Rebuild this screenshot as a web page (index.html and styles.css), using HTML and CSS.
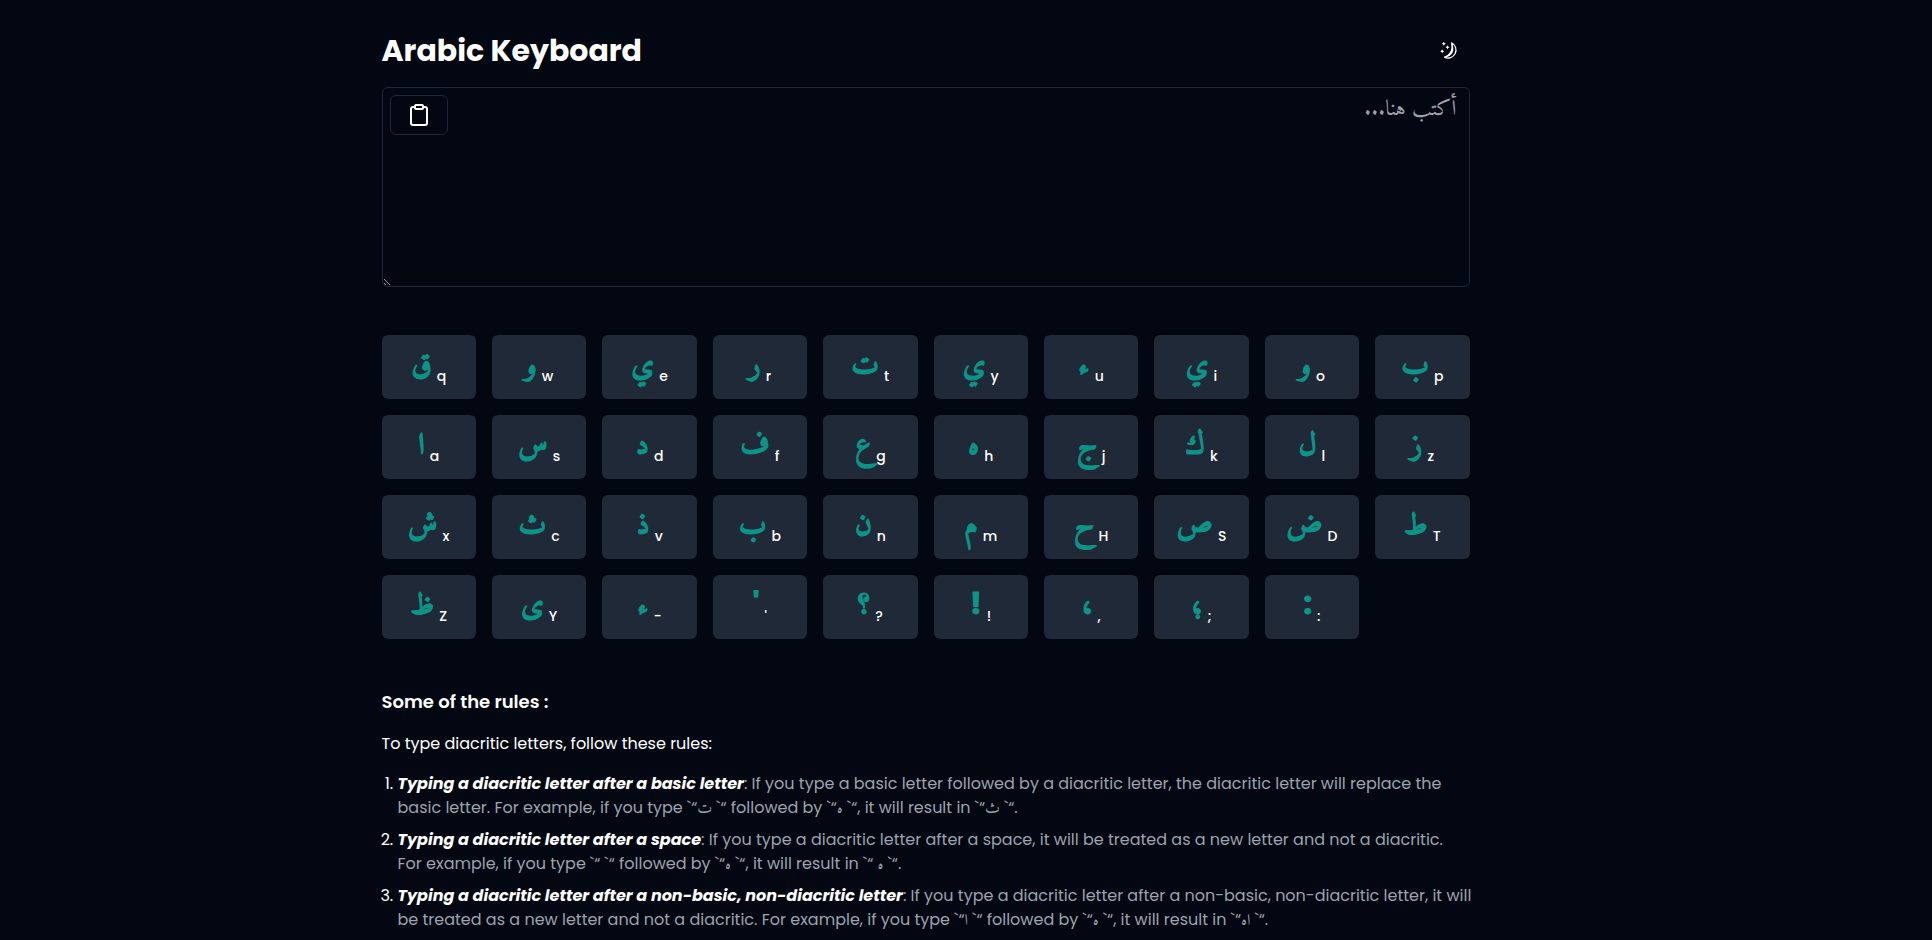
FILE: index.html
```html
<!DOCTYPE html>
<html lang="en">
<head>
<meta charset="utf-8">
<title>Arabic Keyboard</title>
<link rel="stylesheet" href="styles.css">
</head>
<body>
<main class="page">
<header class="header">
<h1 class="title">Arabic Keyboard</h1>
<button class="theme-toggle" type="button" aria-label="Toggle theme">
<svg width="20" height="20" viewBox="0 0 20 20" fill="none" stroke="currentColor" stroke-width="1.200" stroke-linejoin="round" aria-hidden="true">
<path d="M11.500 1.800A7.900 7.900 0 1 1 4.500 16.200C10.500 14.500 13.800 8.500 11.500 1.800z"/>
<path fill="currentColor" stroke="none" d="M11 1.600C13 7.500 10.500 13.500 4.300 16.200C10.500 17 17 10 11 1.600z"/>
<path fill="currentColor" stroke="none" d="M3.800.8l.7 1.300 1.300.7-1.300.7-.7 1.300-.7-1.300-1.300-.7 1.300-.7zM7.500 4.300l.7 1.300 1.300.7-1.300.7-.7 1.300-.7-1.300-1.300-.7 1.300-.7zM2.200 8.300l.7 1.300 1.300.7-1.300.7-.7 1.300-.7-1.300-1.300-.7 1.300-.7z"/>
</svg>
</button>
</header>
<div class="editor">
<textarea class="editor-text" dir="rtl" lang="ar" aria-label="Arabic text" placeholder="أكتب هنا..."></textarea>
<button class="copy" type="button" aria-label="Copy text">
<svg width="24" height="24" viewBox="0 0 24 24" fill="none" stroke="currentColor" stroke-width="2" stroke-linecap="round" stroke-linejoin="round" aria-hidden="true"><rect x="8" y="2" width="8" height="4" rx="1"/><path d="M16 4h2a2 2 0 0 1 2 2v14a2 2 0 0 1-2 2H6a2 2 0 0 1-2-2V6a2 2 0 0 1 2-2h2"/></svg>
</button>
</div>
<div class="keys" id="keys"></div>
<section class="rules">
<h2 class="rules-title">Some of the rules :</h2>
<p class="rules-intro">To type diacritic letters, follow these rules:</p>
<ol class="rules-list">
<li><strong class="rule-name">Typing a diacritic letter after a basic letter</strong><span class="rule-text">: If you type a basic letter followed by a diacritic letter, the diacritic letter will replace the basic letter. For example, if you type `“ت `“ followed by `“ه `“, it will result in `“ث `“.</span></li>
<li><strong class="rule-name">Typing a diacritic letter after a space</strong><span class="rule-text">: If you type a diacritic letter after a space, it will be treated as a new letter and not a diacritic. For&nbsp;example, if you type `“ `“ followed by `“ه `“, it will result in `“ ه `“.</span></li>
<li><strong class="rule-name">Typing a diacritic letter after a non-basic, non-diacritic letter</strong><span class="rule-text">: If you type a diacritic letter after a non-basic, non-diacritic letter, it will be treated as a new letter and not a diacritic. For example, if you type `“ا `“ followed by `“ه `“, it will result in `“اه `“.</span></li>
</ol>
</section>
</main>
<script src="keys.js"></script>
</body>
</html>
```
FILE: styles.css
```css
* { box-sizing: border-box; }
body {
  margin: 0;
  padding-right: 81px;
  background: #030711;
  color: #fff;
  font-family: Poppins, Inter, Amiri, "Noto Naskh Arabic", "Noto Sans Arabic", "DejaVu Sans", sans-serif;
  font-variant-ligatures: no-contextual;
  font-size: 16px;
  line-height: 24px;
}
.page { max-width: 1152px; margin: 0 auto; padding: 31px 32px 32px; }
.header { display: flex; align-items: center; justify-content: space-between; margin-bottom: 16px; }
.title { margin: 0; font-size: 30px; line-height: 36px; font-weight: 700; }
.theme-toggle { height: 40px; border: 0; padding: 0 10px; background: none; color: inherit; display: flex; align-items: center; }
.editor { position: relative; margin-bottom: 48px; }
.editor-text {
  display: block; width: 100%; height: 200px; padding: 8px 12px;
  border: 1px solid #1d283a; border-radius: 6px; background: transparent; color: #fff;
  font-family: Amiri, "Noto Naskh Arabic", "Noto Sans Arabic", "DejaVu Sans", sans-serif; font-size: 22px; line-height: 28px; resize: vertical;
}
.editor-text::placeholder { color: #9ca3af; }
.copy {
  position: absolute; top: 8px; left: 8px; height: 40px; width: 58px; padding: 0;
  display: flex; align-items: center; justify-content: center;
  border: 1px solid #1d283a; border-radius: 6px; background: #030711; color: #fff;
}
.keys { display: grid; grid-template-columns: repeat(10, 1fr); gap: 16px; margin-bottom: 49px; }
.key {
  height: 64px; padding: 0 0 13px; border: 0; border-radius: 6px; background: #1f2937; color: #fff;
  font-family: inherit; font-variant-ligatures: no-contextual; font-size: 14px; font-weight: 500; line-height: 20px;
  display: flex; align-items: flex-end; justify-content: center; gap: 5px;
}
.key-letter { color: #0d9488; font-weight: 700; font-size: 30px; line-height: 44px; -webkit-text-stroke: 1px #0d9488; }
.rules-title { margin: 0 0 16px; font-size: 18px; line-height: 28px; font-weight: 600; }
.rules-intro { margin: 0 0 16px; }
.rules-list { margin: 0 -4px 0 0; padding-left: 16px; display: grid; gap: 8px; }
.rule-name { font-weight: 700; font-style: italic; }
.rule-text { color: #9ca3af; }
```
FILE: keys.js
```js
const rows = [
  ["قq", "وw", "يe", "رr", "تt", "يy", "ءu", "يi", "وo", "بp"],
  ["اa", "سs", "دd", "فf", "عg", "هh", "جj", "كk", "لl", "زz"],
  ["شx", "ثc", "ذv", "بb", "نn", "مm", "حH", "صS", "ضD", "طT"],
  ["ظZ", "ىY", "ء-", "''", "؟?", "!!", "،,", "؛;", "::"]
];
const board = document.getElementById("keys");
rows.flat().forEach(([letter, latin]) => {
  const key = document.createElement("button");
  key.type = "button";
  key.className = "key";
  const glyph = document.createElement("span");
  glyph.className = "key-letter";
  glyph.lang = "ar";
  glyph.textContent = letter;
  const hint = document.createElement("span");
  hint.textContent = latin;
  key.append(glyph, hint);
  board.append(key);
});
```
